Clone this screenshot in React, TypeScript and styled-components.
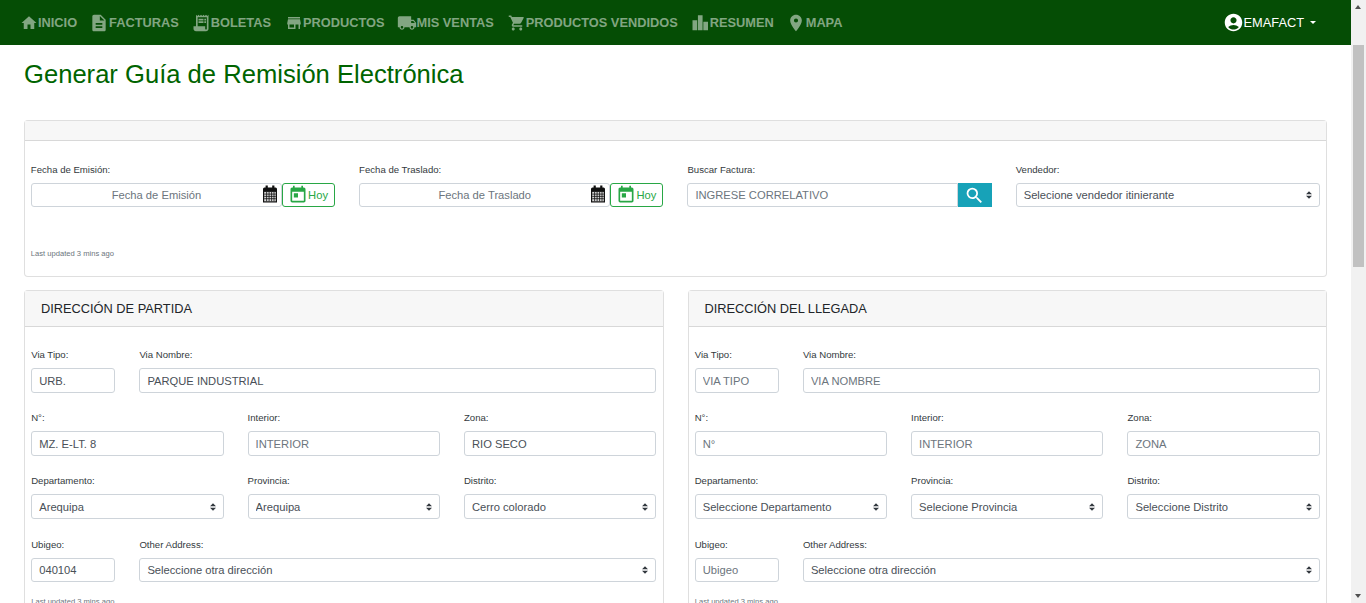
import styled, { createGlobalStyle } from "styled-components"
import {
	MdHome,
	MdDescription,
	MdReceiptLong,
	MdStore,
	MdLocalShipping,
	MdShoppingCart,
	MdPlace,
	MdAccountCircle,
	MdToday,
	MdSearch
} from "react-icons/md"

// Components //

const BarsIcon = ({ size }: { size: number }) => (
	<svg width={size} height={size} viewBox="0 0 24 24" fill="currentColor" aria-hidden="true">
		<path d="M3 8.6h5.6v12H3zM9.5 2.6h5.6v18H9.5zM16 10.6h5.6v10H16z" />
	</svg>
)

const CalendarGlyph = () => (
	<CalendarIcon viewBox="0 0 16 17" aria-hidden="true">
		<path d="M1 3.5a1.5 1.5 0 0 1 1.5-1.5h11A1.5 1.5 0 0 1 15 3.5V17H1z" fill="#111" />
		<path d="M3.6 0h2.2v4.4H3.6zM10.2 0h2.2v4.4h-2.2z" fill="#111" />
		<path d="M2.2 6.4h11.6v9.4H2.2z" fill="#d8d8d8" />
		<path d="M2.2 8.6h11.6M2.2 10.9h11.6M2.2 13.2h11.6M4.6 6.4v9.4M7.1 6.4v9.4M9.6 6.4v9.4M12 6.4v9.4" stroke="#111" strokeWidth="0.8" />
	</CalendarIcon>
)

const DateField = ({ label }: { label: string }) => (
	<Field>
		<Label>{label}:</Label>
		<InputGroup>
			<DateBox>
				<DateInput placeholder={label} readOnly />
				<CalendarGlyph />
			</DateBox>
			<TodayButton type="button">
				<MdToday size={20} />
				Hoy
			</TodayButton>
		</InputGroup>
	</Field>
)

const TextField = ({
	label,
	placeholder,
	value,
	span,
	$last
}: {
	label: string
	placeholder: string
	value?: string
	span: number
	$last?: boolean
}) => (
	<Field $span={span} $last={$last}>
		<Label>{label}:</Label>
		<TextInput placeholder={placeholder} defaultValue={value} />
	</Field>
)

const SelectField = ({ label, value, span, $last }: { label: string; value: string; span: number; $last?: boolean }) => (
	<Field $span={span} $last={$last}>
		<Label>{label}:</Label>
		<Select defaultValue={value}>
			<option>{value}</option>
		</Select>
	</Field>
)

const AddressCard = ({ title, values }: { title: string; values: Values }) => (
	<Card>
		<AddressHeader>{title}</AddressHeader>
		<AddressBody>
			<TextField span={2} label="Via Tipo" placeholder="VIA TIPO" value={values.tipo} />
			<TextField span={10} label="Via Nombre" placeholder="VIA NOMBRE" value={values.nombre} />
			<TextField span={4} label="N°" placeholder="N°" value={values.numero} />
			<TextField span={4} label="Interior" placeholder="INTERIOR" />
			<TextField span={4} label="Zona" placeholder="ZONA" value={values.zona} />
			<SelectField span={4} label="Departamento" value={values.departamento} />
			<SelectField span={4} label="Provincia" value={values.provincia} />
			<SelectField span={4} label="Distrito" value={values.distrito} />
			<TextField $last span={2} label="Ubigeo" placeholder="Ubigeo" value={values.ubigeo} />
			<SelectField $last span={10} label="Other Address" value="Seleccione otra dirección" />
			<AddressNote>Last updated 3 mins ago</AddressNote>
		</AddressBody>
	</Card>
)

export default function App() {
	return (
		<>
			<GlobalStyle />
			<Shell>
				<Column>
					<Navbar>
						<NavList>
							{NAV_ITEMS.map(({ label, Icon, size }) => (
								<NavLink key={label}>
									<NavIcon>
										<Icon size={size} />
									</NavIcon>
									{label}
								</NavLink>
							))}
						</NavList>
						<UserMenu>
							<MdAccountCircle size={21} />
							EMAFACT
							<Caret />
						</UserMenu>
					</Navbar>
					<Main>
						<Title>Generar Guía de Remisión Electrónica</Title>
						<Card>
							<EmptyHeader />
							<TopBody>
								<TopRow>
									<DateField label="Fecha de Emisión" />
									<DateField label="Fecha de Traslado" />
									<Field>
										<Label>Buscar Factura:</Label>
										<InputGroup>
											<SearchInput placeholder="INGRESE CORRELATIVO" />
											<SearchButton type="button">
												<MdSearch size={21} />
											</SearchButton>
										</InputGroup>
									</Field>
									<Field>
										<Label>Vendedor:</Label>
										<Select defaultValue="Selecione vendedor itinierante">
											<option>Selecione vendedor itinierante</option>
										</Select>
									</Field>
								</TopRow>
								<TopNote>Last updated 3 mins ago</TopNote>
							</TopBody>
						</Card>
						<AddressGrid>
							<AddressCard title="DIRECCIÓN DE PARTIDA" values={PARTIDA} />
							<AddressCard title="DIRECCIÓN DEL LLEGADA" values={LLEGADA} />
						</AddressGrid>
					</Main>
				</Column>
				<ScrollRail>
					<ScrollArrow />
					<ScrollThumb />
					<ScrollArrow $down />
				</ScrollRail>
			</Shell>
		</>
	)
}

// Data //

const NAV_ITEMS = [
	{ label: "INICIO", Icon: MdHome, size: 18 },
	{ label: "FACTURAS", Icon: MdDescription, size: 20 },
	{ label: "BOLETAS", Icon: MdReceiptLong, size: 20 },
	{ label: "PRODUCTOS", Icon: MdStore, size: 18 },
	{ label: "MIS VENTAS", Icon: MdLocalShipping, size: 20 },
	{ label: "PRODUCTOS VENDIDOS", Icon: MdShoppingCart, size: 18 },
	{ label: "RESUMEN", Icon: BarsIcon, size: 20 },
	{ label: "MAPA", Icon: MdPlace, size: 20 }
]

type Values = Record<string, string>

const PARTIDA: Values = {
	tipo: "URB.",
	nombre: "PARQUE INDUSTRIAL",
	numero: "MZ. E-LT. 8",
	zona: "RIO SECO",
	departamento: "Arequipa",
	provincia: "Arequipa",
	distrito: "Cerro colorado",
	ubigeo: "040104"
}

const LLEGADA: Values = {
	departamento: "Seleccione Departamento",
	provincia: "Selecione Provincia",
	distrito: "Seleccione Distrito"
}

// Styled Components //

const GlobalStyle = createGlobalStyle`
	body {
		margin: 0;
		background: #fff;
		color: #212529;
		font-family: "Liberation Sans", Arial, sans-serif;
	}
`

const Shell = styled.div`
	display: flex;
	height: 100vh;
	overflow: hidden;
`

const Column = styled.div`
	display: flex;
	flex: 1;
	flex-direction: column;
	min-width: 0;
`

const ScrollRail = styled.aside`
	display: flex;
	flex: none;
	flex-direction: column;
	width: 15px;
	background: #f1f1f1;
`

const ScrollArrow = styled.span<{ $down?: boolean }>`
	flex: none;
	width: 0;
	height: 0;
	margin: ${({ $down }) => ($down ? "auto 0 5px 4px" : "5px 0 0 4px")};
	border-left: 3.5px solid transparent;
	border-right: 3.5px solid transparent;
	border-bottom: ${({ $down }) => ($down ? "0" : "4px solid #505050")};
	border-top: ${({ $down }) => ($down ? "4px solid #505050" : "0")};
`

const ScrollThumb = styled.span`
	flex: none;
	height: 222px;
	margin: 36px 2px 0;
	background: #c1c1c1;
`

const Navbar = styled.nav`
	flex: none;
	height: 45px;
	display: flex;
	align-items: center;
	padding: 0 35px 0 18px;
	background: #054d05;
`

const NavList = styled.div`
	display: flex;
	align-items: center;
	gap: 12px;
`

const NavLink = styled.a`
	display: flex;
	align-items: center;
	color: rgba(255, 255, 255, 0.5);
	font-size: 12.8px;
	font-weight: 700;
	white-space: nowrap;
`

const NavIcon = styled.span`
	display: flex;
	justify-content: flex-end;
	width: 20px;
`

const UserMenu = styled.div`
	display: flex;
	align-items: center;
	margin-left: auto;
	color: #fff;
	font-size: 12.8px;
`

const Caret = styled.span`
	margin-left: 6px;
	border-top: 3.6px solid #fff;
	border-left: 3.6px solid transparent;
	border-right: 3.6px solid transparent;
`

const Main = styled.main`
	flex: 1;
	min-height: 0;
	padding: 15px 24px 24px;
`

const Title = styled.h1`
	margin: 0 0 31px;
	color: #006400;
	font-size: 25.6px;
	font-weight: 400;
	line-height: 29px;
`

const Card = styled.section`
	border: 1px solid rgba(0, 0, 0, 0.125);
	border-radius: 4px;
	background: #fff;
`

const EmptyHeader = styled.header`
	height: 19px;
	background: #f7f7f7;
	border-bottom: 1px solid rgba(0, 0, 0, 0.125);
`

const TopBody = styled.div`
	height: 135px;
	padding: 0 6px 0 5.8px;
`

const TopRow = styled.div`
	display: grid;
	grid-template-columns: repeat(4, 1fr);
	column-gap: 24px;
	padding-top: 23px;

	input,
	select,
	button {
		height: 24px;
	}
`

const Field = styled.div<{ $span?: number; $last?: boolean }>`
	grid-column: span ${({ $span = 1 }) => $span};
	min-width: 0;
	margin-top: ${({ $last }) => ($last ? "1px" : "0")};

	input,
	select {
		height: ${({ $last }) => ($last ? "24px" : "")};
	}
`

const Label = styled.label`
	display: block;
	height: 12px;
	margin-bottom: 7px;
	color: #343a40;
	font-size: 9.6px;
	line-height: 12px;
`

const InputGroup = styled.div`
	display: flex;
`

const TextInput = styled.input`
	box-sizing: border-box;
	display: block;
	width: 100%;
	height: 25px;
	padding: 0 7px;
	border: 1px solid #ced4da;
	border-radius: 3px;
	background: #fff;
	color: #495057;
	font-family: inherit;
	font-size: 11.2px;

	&::placeholder {
		color: #6c757d;
		opacity: 1;
	}
`

const DateBox = styled.div`
	position: relative;
	flex: 1;
	min-width: 0;
`

const DateInput = styled(TextInput)`
	text-align: center;
`

const CalendarIcon = styled.svg`
	position: absolute;
	top: 2px;
	right: 4px;
	width: 16px;
	height: 18px;
`

const TodayButton = styled.button`
	box-sizing: border-box;
	display: flex;
	align-items: center;
	flex: none;
	width: 53px;
	padding: 0 0 0 5px;
	border: 1px solid #28a745;
	border-radius: 3px;
	background: #fff;
	color: #28a745;
	font-family: inherit;
	font-size: 11.2px;
`

const SearchInput = styled(TextInput)`
	flex: 1;
	min-width: 0;
	border-radius: 3px 0 0 3px;
`

const SearchButton = styled.button`
	display: flex;
	align-items: center;
	justify-content: center;
	flex: none;
	width: 34px;
	padding: 0;
	border: 0;
	background: #17a2b8;
	color: #fff;
`

const Select = styled.select`
	box-sizing: border-box;
	display: block;
	width: 100%;
	height: 25px;
	padding: 0 20px 0 7px;
	border: 1px solid #ced4da;
	border-radius: 3px;
	background: #fff url("data:image/svg+xml,%3csvg xmlns='http://www.w3.org/2000/svg' viewBox='0 0 4 5'%3e%3cpath fill='%23343a40' d='M2 0L0 2h4zm0 5L0 3h4z'/%3e%3c/svg%3e") no-repeat right 7px center / 6px 8px;
	color: #495057;
	font-family: inherit;
	font-size: 11.2px;
	appearance: none;
`

const TopNote = styled.small`
	display: block;
	margin-top: 42px;
	color: #6c757d;
	font-size: 7.6px;
`

const AddressGrid = styled.div`
	display: grid;
	grid-template-columns: 1fr 1fr;
	column-gap: 24px;
	margin-top: 13px;
`

const AddressHeader = styled.header`
	height: 35px;
	padding-left: 16px;
	background: #f7f7f7;
	border-bottom: 1px solid rgba(0, 0, 0, 0.125);
	color: #212529;
	font-size: 12.8px;
	line-height: 35px;
`

const AddressBody = styled.div`
	display: grid;
	grid-template-columns: repeat(12, 1fr);
	column-gap: 24px;
	row-gap: 19px;
	padding: 22px 6.2px 16px 6.2px;
`

const AddressNote = styled.small`
	grid-column: span 12;
	margin-top: -4px;
	color: #6c757d;
	font-size: 7.6px;
`
